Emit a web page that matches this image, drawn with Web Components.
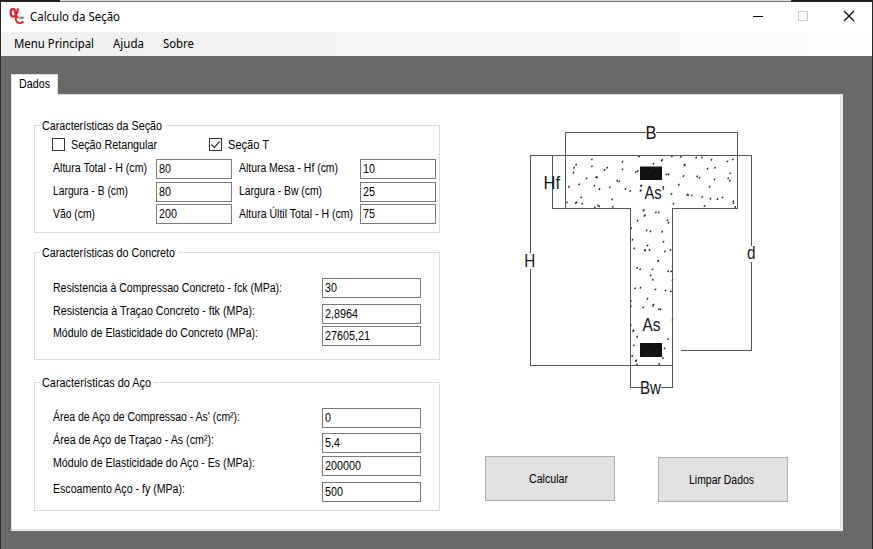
<!DOCTYPE html>
<html lang="pt">
<head>
<meta charset="utf-8">
<title>Calculo da Seção</title>
<style>
html,body{margin:0;height:100%;overflow:hidden;background:#696969}
body{font-family:"Liberation Sans",Arial,sans-serif;font-size:12px;color:#000}
</style>
</head>
<body>
<section-app></section-app>
<script>
const define = (name, html, setup) => customElements.define(name, class extends HTMLElement {
  connectedCallback() {
    if (this.shadowRoot) return;
    this.attachShadow({ mode: 'open' }).innerHTML = html;
    if (setup) setup(this, this.shadowRoot);
  }
});

/* Text condensed horizontally to the width given by its w attribute. */
define('fit-text', `<style>
:host{display:block;height:14px;line-height:14px;white-space:nowrap;flex:none}
span{display:inline-block;transform-origin:0 0}
</style><span><slot></slot></span>`, (el, root) => {
  const w = +el.getAttribute('w');
  const s = root.querySelector('span');
  el.style.width = w + 'px';
  s.style.transform = `scaleX(${w / s.getBoundingClientRect().width})`;
});

define('app-logo', `<style>:host{display:block;width:16px;height:17px}svg{display:block}</style>
<svg width="16" height="18" viewBox="0 0 16 18" fill="none" stroke="#e2232b">
<path d="M9.200 1.500C8.300 5.500 6.800 9.600 4.300 9.600C2.200 9.600 1.500 7.600 1.600 5.500C1.700 3.300 2.700 2 4.200 2C6.300 2 6.300 5.500 7 8C7.300 9.200 8 9.800 9 9.300" stroke-width="2.300"/>
<path d="M7.600 9.200C6.400 11 6.700 13.600 8.200 15C9.900 16.500 12.700 16.300 14.500 14.600" stroke-width="2"/>
<path d="M8.600 11.800l1-2 1 2M11.500 9.800v2M12.500 9.900h1v1.800h-1zM14.800 9.600v2.200" stroke="#666" stroke-width=".8"/>
</svg>`);

define('title-bar', `<style>
:host{display:flex;height:30px;background:#fff;align-items:flex-start;font-family:"Noto Sans","Open Sans",sans-serif}
app-logo{margin:5px 5px 0 8px}
fit-text{margin-top:8px}
.controls{margin-left:auto;display:flex}
svg{display:block}
</style><app-logo></app-logo><fit-text w="90">Calculo da Seção</fit-text>
<div class="controls"><svg width="138" height="30" viewBox="734 2 138 30" fill="none" shape-rendering="crispEdges">
<path d="M753 16.500h10" stroke="#000"/><rect x="798.500" y="11.500" width="9" height="9" stroke="#ccc"/>
<path d="M844 11l10 10M854 11l-10 10" stroke="#000" stroke-width="1.100" shape-rendering="auto"/></svg></div>`);

define('menu-bar', `<style>
:host{display:flex;gap:19px;height:24px;padding-left:13px;box-sizing:border-box;background:linear-gradient(90deg,#f0f0f0,#f3f3f3 30%,#fafafa 85%,#fdfdfd);font-family:"Noto Sans","Open Sans",sans-serif}
fit-text{margin-top:5px}
</style><fit-text w="80">Menu Principal</fit-text><fit-text w="31">Ajuda</fit-text><fit-text w="31">Sobre</fit-text>`);

define('group-box', `<style>
:host{display:block;box-sizing:border-box;width:406px;border:1px solid #dcdcdc}
.legend{display:flex;width:max-content;height:14px;margin:-7px 0 0 5px;padding:0 3px 0 2px;background:#fff}
</style><div class="legend"><slot name="legend"></slot></div><slot></slot>`);

define('text-box', `<style>
:host{display:block;box-sizing:border-box;height:20px;border:1px solid #7a7a7a;background:#fff;padding:2px 0 0 2px;flex:none}
</style>`, (el, root) => {
  el.style.width = el.getAttribute('size') + 'px';
  const v = el.getAttribute('value');
  const text = document.createElement('fit-text');
  text.setAttribute('w', v.replace(',', '').length * 6 + (v.includes(',') ? 3 : 0));
  text.textContent = v;
  root.append(text);
});

/* One line of a form: label column followed by a text box. */
define('form-field', `<style>
:host{display:flex;height:20px}
.label{flex:none}
</style><div class="label"><slot></slot></div>`, (el, root) => {
  const label = root.querySelector('.label');
  label.style.width = el.getAttribute('column') + 'px';
  label.style.marginTop = (el.getAttribute('drop') || 0) + 'px';
  const box = document.createElement('text-box');
  box.setAttribute('size', el.getAttribute('size'));
  box.setAttribute('value', el.getAttribute('value'));
  root.append(box);
});

define('check-box', `<style>
:host{display:flex;gap:6px;height:14px}
svg{display:block;width:13px;height:13px}
path{display:none}
:host([checked]) path{display:block}
</style><svg viewBox="0 0 13 13" fill="none"><rect x=".5" y=".5" width="12" height="12" fill="#fff" stroke="#333"/><path d="M2.500 6.500l2.800 2.900 5.300-5.900" stroke="#333" stroke-width="1.200"/></svg><slot></slot>`);

define('push-button', `<style>
:host{display:flex;align-items:center;justify-content:center;box-sizing:border-box;width:130px;height:45px;padding-right:3px;background:#e1e1e1;border:1px solid #adadad}
</style><slot></slot>`);

define('beam-diagram', `<style>
:host{display:block}svg{display:block}
text{font-size:18px;fill:#151520}
.l path{stroke:#555;stroke-width:1}
</style><svg width="250" height="280" viewBox="520 120 250 280" fill="none">
<g id="specks" fill="#222"></g>
<g class="l" shape-rendering="crispEdges">
<path d="M530.500 253V155.500H751.500V246M530.500 269V365.500H673M751.500 262V350.500H681"/>
<path d="M552.500 155V208.500H630.500V387.500H641M565.500 208V132.500H646M656 132.500H737.500V208.500H672.500V387.500H661"/>
</g>
<g fill="#111"><rect x="640" y="166.500" width="22" height="13.500"/><rect x="640" y="343" width="22" height="14"/></g>
<path d="M644 178l8-9M653 178l6-8M645 355l9-10M654 355l6-8" stroke="#222"/>
<g>
<text x="645.500" y="139" textLength="11" lengthAdjust="spacingAndGlyphs">B</text>
<text x="543.500" y="188.500" textLength="16.500" lengthAdjust="spacingAndGlyphs">Hf</text>
<text x="644.500" y="199" textLength="20" lengthAdjust="spacingAndGlyphs">As'</text>
<text x="524.300" y="267" textLength="11" lengthAdjust="spacingAndGlyphs">H</text>
<text x="747" y="259" textLength="8.500" lengthAdjust="spacingAndGlyphs">d</text>
<text x="642.500" y="331" textLength="18" lengthAdjust="spacingAndGlyphs">As</text>
<text x="640" y="393.500" textLength="21" lengthAdjust="spacingAndGlyphs">Bw</text>
</g></svg>`, (el, root) => {
  /* Concrete aggregate: x,y pairs on a grid of thirds of a pixel from each origin. */
  const sets = [
    [515, 115, '230,133 230,154 183,149 177,158 175,173 268,165 276,158 322,140 322,163 362,171 368,168 214,190 243,186 246,187 306,197 312,199 161,215 192,208 238,212 253,222 284,217 331,222 345,228 376,227 379,212 198,247 201,266 184,262 182,264 155,262 291,253 293,275 248,271 252,274 239,277 386,286 388,302 367,317 348,340 352,374 357,400 389,405 372,124'],
    [640, 115, '66,135 64,137 40,146 95,124 122,125 133,149 134,151 168,128 185,127 214,134 262,139 278,133 202,161 224,158 79,178 85,178 130,183 171,184 178,188 223,193 270,175 264,190 269,197 116,209 208,215 94,237 141,239 144,240 155,241 186,246 211,251 232,252 247,247 279,259 280,265 285,276 193,273 100,266 2,212 2,226 10,286 14,301 47,292 56,292 82,316 85,323 19,346 31,349 66,350 70,380 22,391 15,406 28,405 74,409 91,405 54,437'],
    [590, 260, '204,3 141,24 150,28 187,28 181,46 188,59 234,34 243,34 135,85 151,83 196,88 226,91 242,94 247,60 122,123 122,139 172,116 159,142 190,134 189,137 206,147 211,148 247,179 122,196 129,211 130,213 141,230 234,237 131,256 223,265 126,288 138,301 138,303 218,294 140,313 207,312']
  ];
  root.querySelector('#specks').innerHTML = sets.map(([ox, oy, pts]) => pts.split(' ').map(p => {
    const [x, y] = p.split(',').map(n => n / 3);
    const cx = ox + x, cy = oy + y;
    return `<path d="M${cx - .9} ${cy + .3}l1-1.200 1 .1-.4 1.600-1 .2z"/>`;
  }).join('')).join('');
});

define('tab-view', `<style>
:host{display:block;width:832px}
.tab{width:47px;height:21px;box-sizing:border-box;background:#fff;border:1px solid #dcdcdc;border-bottom:0;padding:2px 0 0 7px;position:relative;z-index:1}
.page{box-sizing:border-box;height:437px;margin-top:-1px;background:#fff;border:1px solid #dcdcdc;border-right:0;border-bottom:0;box-shadow:inset -2px -1px #f0f0f0,inset -3px -2px #dcdcdc}
</style><div class="tab"><slot name="tab"></slot></div><div class="page"><slot></slot></div>`);

define('section-app', `<style>
:host{display:block;box-sizing:border-box;width:873px;height:549px;border-left:1px solid #292929;border-right:1px solid #292929;background:#696969}
.top{height:2px;background:linear-gradient(90deg,#242224 59px,transparent 59px,transparent 790px,#242224 790px),linear-gradient(#ddd 50%,#777 50%)}
tab-view{margin:18px 0 0 10px}
.content{display:flex;padding:30px 0 0 22px}
.left{width:406px}
.g1{height:108px}.g2{height:108px;margin-top:19px}.g3{height:129px;margin-top:22px}
.checks{display:flex;padding:5px 0 0 17px}
check-box + check-box{margin-left:52px}
.two{display:grid;grid-template-columns:186px 197px;padding:7px 0 0 18px;row-gap:3px}
.r3{margin-top:-1px}
.list{padding-left:18px;display:flex;flex-direction:column}
.right{padding-left:45px}
beam-diagram{margin:-5px 0 0 35px}
.buttons{display:flex;gap:43px;margin-top:56px}
.lower{margin-top:1px}
</style>
<div class="top"></div>
<title-bar></title-bar><menu-bar></menu-bar>
<tab-view><fit-text slot="tab" w="31">Dados</fit-text>
<div class="content"><div class="left">
<group-box class="g1"><fit-text slot="legend" w="120">Características da Seção</fit-text>
<div class="checks"><check-box><fit-text w="86">Seção Retangular</fit-text></check-box><check-box checked><fit-text w="41">Seção T</fit-text></check-box></div>
<div class="two">
<form-field column="103" size="76" value="80" drop="2"><fit-text w="94">Altura Total - H (cm)</fit-text></form-field>
<form-field column="121" size="76" value="10" drop="2"><fit-text w="99">Altura Mesa - Hf (cm)</fit-text></form-field>
<form-field column="103" size="76" value="80" drop="2"><fit-text w="75">Largura - B (cm)</fit-text></form-field>
<form-field column="121" size="76" value="25" drop="2"><fit-text w="83">Largura - Bw (cm)</fit-text></form-field>
<form-field class="r3" column="103" size="76" value="200" drop="3"><fit-text w="42">Vão (cm)</fit-text></form-field>
<form-field class="r3" column="121" size="76" value="75" drop="3"><fit-text w="114">Altura Últil Total - H (cm)</fit-text></form-field>
</div></group-box>
<group-box class="g2"><fit-text slot="legend" w="133">Características do Concreto</fit-text>
<div class="list" style="padding-top:18px">
<form-field column="269" size="99" value="30" drop="3"><fit-text w="229">Resistencia à Compressao Concreto - fck (MPa):</fit-text></form-field>
<form-field style="margin-top:6px" column="269" size="99" value="2,8964" drop="0"><fit-text w="202">Resistencia à Traçao Concreto - ftk (MPa):</fit-text></form-field>
<form-field style="margin-top:2px" column="269" size="99" value="27605,21" drop="0"><fit-text w="205">Módulo de Elasticidade do Concreto (MPa):</fit-text></form-field>
</div></group-box>
<group-box class="g3"><fit-text slot="legend" w="109">Características do Aço</fit-text>
<div class="list" style="padding-top:18px">
<form-field column="269" size="99" value="0" drop="2"><fit-text w="187">Área de Aço de Compressao - As' (cm²):</fit-text></form-field>
<form-field style="margin-top:5px" column="269" size="99" value="5,4" drop="0"><fit-text w="161">Área de Aço de Traçao - As (cm²):</fit-text></form-field>
<form-field style="margin-top:3px" column="269" size="99" value="200000" drop="0"><fit-text w="202">Módulo de Elasticidade do Aço - Es (MPa):</fit-text></form-field>
<form-field style="margin-top:6px" column="269" size="99" value="500" drop="0"><fit-text w="132">Escoamento Aço - fy (MPa):</fit-text></form-field>
</div></group-box>
</div>
<div class="right"><beam-diagram></beam-diagram>
<div class="buttons"><push-button><fit-text w="39">Calcular</fit-text></push-button><push-button class="lower"><fit-text w="65">Limpar Dados</fit-text></push-button></div>
</div></div></tab-view>`);
</script>
</body>
</html>
